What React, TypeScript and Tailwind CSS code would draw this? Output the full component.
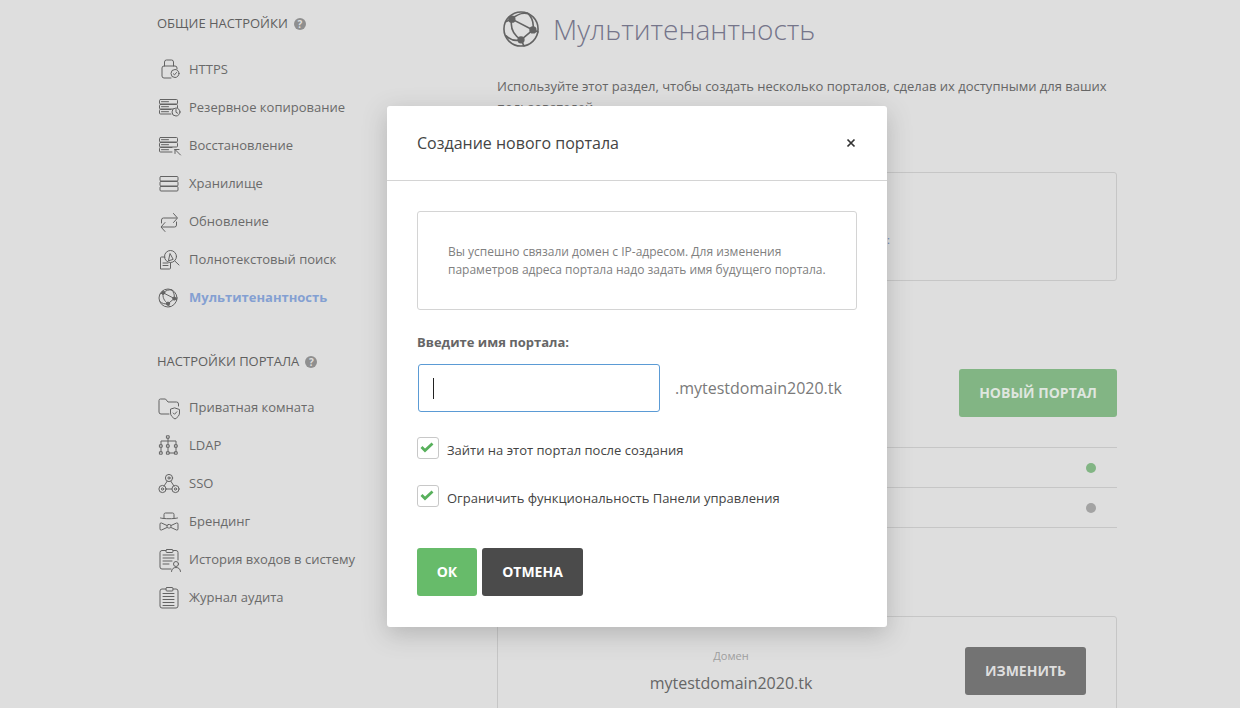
import React from "react";

const S = { fill: "none", stroke: "#636363", strokeWidth: 1, strokeLinecap: "round" as const, strokeLinejoin: "round" as const };

function Ic({ children }: { children: React.ReactNode }) {
  return (
    <svg width="22" height="22" viewBox="0 0 22 22" className="shrink-0 overflow-visible" {...S}>
      {children}
    </svg>
  );
}

const Globe = ({ r = 1.6 }: { r?: number }) => (
  <>
    <circle cx="11" cy="11" r="9" />
    <path d="M6.200 5.800C8.500 3.500 12 2.200 15 3M6.200 5.800L17.300 11.500M6.200 5.800C5.200 10 7 14 11 16.700M17.300 11.500L11 16.700M17.300 11.500C17.800 8.500 17 5 14.500 2.700M11 16.700C8 17.500 5 16.500 3 14.500M11 16.700L12.500 19.800M17.300 11.500L19.900 12.500M6.200 5.800L3.200 7" />
    <circle cx="6.200" cy="5.800" r={r} fill="#636363" />
    <circle cx="17.300" cy="11.500" r={r} fill="#636363" />
    <circle cx="11" cy="16.700" r={r} fill="#636363" />
  </>
);

const Rows3 = ({ last = 19 }: { last?: number }) => (
  <>
    <rect x="2.500" y="2.500" width="18" height="4.500" rx="1" />
    <rect x="2.500" y="7.500" width="18" height="4.500" rx="1" />
    <path d={`M${last} 12.500H3.500a1 1 0 0 0-1 1v2.500a1 1 0 0 0 1 1H${last}`} />
  </>
);

const icons: Record<string, React.ReactNode> = {
  https: (
    <Ic>
      <path d="M7.500 7V3a2 2 0 0 1 2-2h5a2 2 0 0 1 2 2v4" />
      <path d="M14 19H7a2 2 0 0 1-2-2V9a2 2 0 0 1 2-2h11a2 2 0 0 1 2 2v1" />
      <circle cx="18" cy="14.500" r="4" />
      <path d="M16.300 14.700l1.200 1.200 2-2.400" />
    </Ic>
  ),
  backup: (
    <Ic>
      <Rows3 last={14} />
      <path d="M4.500 4.700h7M4.500 9.700h7M4.500 14.700h7" />
      <circle cx="19" cy="15" r="4" fill="#dedede" />
      <path d="M19 12.500v2.800l1.800 1" />
    </Ic>
  ),
  restore: (
    <Ic>
      <Rows3 last={15} />
      <path d="M4.500 4.700h7M4.500 9.700h7M4.500 14.700h7" />
      <path d="M18 14.500h4M18 14.500v4M18 14.500l5.500 5.500" />
    </Ic>
  ),
  storage: (
    <Ic>
      <rect x="3" y="3.500" width="18" height="4.500" rx="1" />
      <rect x="3" y="8.500" width="18" height="4.500" rx="1" />
      <rect x="3" y="13.500" width="18" height="4.500" rx="1" />
    </Ic>
  ),
  update: (
    <Ic>
      <path d="M4.500 12V9a2 2 0 0 1 2-2h13M16.500 2.500L20.500 7l-4 4.500" />
      <path d="M19.500 11v3a2 2 0 0 1-2 2h-13M8 11.500L4 16l4 4.500" />
    </Ic>
  ),
  search: (
    <Ic>
      <circle cx="13.500" cy="7.500" r="6" />
      <path d="M17.800 12l4.200 4M11.500 11.500L13 4.500l3 5.500z" />
      <path d="M8 8H4.500a1 1 0 0 0-1 1v11h9a1 1 0 0 0 1-1v-5M6 14h5M6 16.500h5" />
    </Ic>
  ),
  globe: (
    <Ic>
      <Globe />
    </Ic>
  ),
  folder: (
    <Ic>
      <path d="M12 17H4a2 2 0 0 1-2-2V3.500A1.500 1.500 0 0 1 3.500 2h5l2.500 3h8.500a2 2 0 0 1 2 2v2" />
      <path d="M18 11l4.500 1.500v3.500c0 2.500-2 4.500-4.500 6-2.500-1.500-4.500-3.500-4.500-6v-3.500z" />
      <path d="M16.200 16l1.300 1.300 2.300-2.500" />
    </Ic>
  ),
  ldap: (
    <Ic>
      <rect x="9.800" y="0.800" width="2.400" height="2.400" />
      <rect x="2.800" y="9.800" width="2.400" height="2.400" />
      <rect x="9.800" y="9.800" width="2.400" height="2.400" />
      <rect x="17.800" y="9.800" width="2.400" height="2.400" />
      <rect x="2.800" y="16.800" width="2.400" height="2.400" />
      <rect x="9.800" y="16.800" width="2.400" height="2.400" />
      <rect x="17.800" y="16.800" width="2.400" height="2.400" />
      <path d="M11 3.200v6.600M4 9.800V6h15v3.800M4 12.200v4.600M11 12.200v4.600M19 12.200v4.600M12.200 18h5.600" />
    </Ic>
  ),
  sso: (
    <Ic>
      <circle cx="12" cy="5" r="3.600" />
      <circle cx="5.500" cy="16" r="3.600" />
      <circle cx="18.500" cy="16" r="3.600" />
      <circle cx="12" cy="5" r="1.100" />
      <circle cx="5.500" cy="16" r="1.100" />
      <circle cx="18.500" cy="16" r="1.100" />
      <path d="M10.200 8.200L7 13M13.800 8.200L17 13M9.100 16h5.800" />
    </Ic>
  ),
  brand: (
    <Ic>
      <path d="M7 7V3.500A1.500 1.500 0 0 1 8.500 2h7A1.500 1.500 0 0 1 17 3.500V7M3.500 7c3.500 1 13.500 1 17 0" />
      <path d="M10 14.500l-5.500-2.500a1.200 1.200 0 0 0-1.500 1.200v4.600a1.200 1.200 0 0 0 1.500 1.200l5.500-2.500M14 14.500l5.500-2.500a1.200 1.200 0 0 1 1.500 1.200v4.600a1.200 1.200 0 0 1-1.500 1.200l-5.500-2.500" />
      <rect x="10" y="13.500" width="4" height="3.500" rx="1.500" />
    </Ic>
  ),
  history: (
    <Ic>
      <path d="M14 20H5a2 2 0 0 1-2-2V3.500a2 2 0 0 1 2-2h4M16 1.500h3a2 2 0 0 1 2 2V11" />
      <rect x="9" y="0.500" width="7" height="3" rx="1" />
      <path d="M6 6h11M6 9h11M6 12h9M6 15h6" />
      <circle cx="19" cy="15" r="2.500" />
      <path d="M14.500 22.500c0-2.500 2-4 4.500-4s4.500 1.500 4.500 4" />
    </Ic>
  ),
  audit: (
    <Ic>
      <path d="M9 2H5a2 2 0 0 0-2 2v15a2 2 0 0 0 2 2h14a2 2 0 0 0 2-2V4a2 2 0 0 0-2-2h-3" />
      <rect x="9" y="0.500" width="7" height="3.500" rx="1" />
      <path d="M6 6.500h11M6 9.500h11M6 12.500h11M6 15.500h11M6 18.500h11" />
    </Ic>
  ),
};

function Help() {
  return (
    <span className="ml-[6px] flex h-[12px] w-[12px] items-center justify-center rounded-full bg-[#8f8f8f] text-[10px] font-bold leading-none text-[#dedede]">
      ?
    </span>
  );
}

function Heading({ children }: { children: React.ReactNode }) {
  return (
    <div className="flex h-[20px] items-center text-[13px] text-[#5f5f5f]">
      {children}
      <Help />
    </div>
  );
}

function Row({ icon, label, active }: { icon: string; label: string; active?: boolean }) {
  return (
    <div className="flex h-[38px] items-center">
      <span className="flex w-[32px] shrink-0">{icons[icon]}</span>
      <span className={active ? "text-[13px] font-bold text-[#84a0d2]" : "text-[13px] text-[#6a6a6a]"}>{label}</span>
    </div>
  );
}

function Check({ label }: { label: string }) {
  return (
    <div className="flex h-[22px] items-start">
      <span className="flex h-[22px] w-[22px] items-center justify-center rounded-[3px] border border-[#c8c8c8] bg-white">
        <svg width="14" height="12" viewBox="0 0 14 12" className="-mt-[3px] -ml-[2px]">
          <path d="M1.500 6l3.500 3.500L12.500 2.500" fill="none" stroke="#58b05c" strokeWidth="2.800" />
        </svg>
      </span>
      <span className="mt-[2px] ml-[8px] text-[13px] leading-[22px] text-[#444444]">{label}</span>
    </div>
  );
}

export default function App() {
  return (
    <div
      className="relative flex h-[708px] w-[1240px] overflow-hidden bg-[#dedede] pl-[157px]"
      style={{ fontFamily: '"Open Sans", "Noto Sans", sans-serif' }}
    >
      <aside className="w-[340px] shrink-0 pt-[14px]">
        <Heading>ОБЩИЕ НАСТРОЙКИ</Heading>
        <nav className="mt-[17px]">
          <Row icon="https" label="HTTPS" />
          <Row icon="backup" label="Резервное копирование" />
          <Row icon="restore" label="Восстановление" />
          <Row icon="storage" label="Хранилище" />
          <Row icon="update" label="Обновление" />
          <Row icon="search" label="Полнотекстовый поиск" />
          <Row icon="globe" label="Мультитенантность" active />
        </nav>
        <div className="mt-[35px]">
          <Heading>НАСТРОЙКИ ПОРТАЛА</Heading>
        </div>
        <nav className="mt-[17px]">
          <Row icon="folder" label="Приватная комната" />
          <Row icon="ldap" label="LDAP" />
          <Row icon="sso" label="SSO" />
          <Row icon="brand" label="Брендинг" />
          <Row icon="history" label="История входов в систему" />
          <Row icon="audit" label="Журнал аудита" />
        </nav>
      </aside>

      <main className="w-[620px] shrink-0">
        <div className="flex h-[58px] items-center pl-[6px]">
          <svg width="36" height="36" viewBox="1.500 1.500 19 19" className="shrink-0" {...S} strokeWidth={0.85}>
            <Globe r={1.5} />
          </svg>
          <h1 className="ml-[14px] text-[28px] font-light leading-[38px] text-[#75758a]">Мультитенантность</h1>
        </div>
        <p className="mt-[18px] text-[13px] leading-[21px] text-[#666666]">
          Используйте этот раздел, чтобы создать несколько порталов, сделав их доступными для ваших пользователей
        </p>
        <div className="mt-[54px] flex h-[109px] items-center justify-end rounded-[3px] border border-[#c6c6c6] pt-[26px] pr-[226px]">
          <span className="text-[11px] leading-none text-[#5b7fb5]">:</span>
        </div>
        <div className="mt-[88px] flex justify-end">
          <button className="h-[48px] w-[158px] rounded-[3px] bg-[#82b584] pb-[1px] text-[14px] font-bold text-[#dfe6df]">
            НОВЫЙ ПОРТАЛ
          </button>
        </div>
        <div className="mt-[30px] border-y border-[#c6c6c6]">
          <div className="flex h-[39px] items-center justify-end pr-[21px]">
            <span className="h-[10px] w-[10px] rounded-full bg-[#82b584]" />
          </div>
          <div className="flex h-[40px] items-center justify-end border-t border-[#c6c6c6] pr-[21px]">
            <span className="h-[10px] w-[10px] rounded-full bg-[#a3a3a3]" />
          </div>
        </div>
        <div className="mt-[88px] flex h-[110px] items-start justify-between rounded-[3px] border border-[#c6c6c6] pt-[30px] pr-[30px]">
          <div className="w-[466px] text-center">
            <div className="text-[11px] leading-[18px] text-[#a0a0a0]">Домен</div>
            <div className="mt-[7px] text-[16px] leading-[22px] text-[#666666]">mytestdomain2020.tk</div>
          </div>
          <button className="h-[48px] w-[121px] rounded-[3px] bg-[#737373] pb-[1px] text-[14px] font-bold text-[#dedede]">
            ИЗМЕНИТЬ
          </button>
        </div>
      </main>

      <div className="absolute top-[106px] left-[387px] h-[521px] w-[500px] rounded-[3px] bg-white shadow-[0_7px_25px_rgba(85,85,85,0.3)]">
        <div className="flex h-[75px] items-center justify-between border-b border-[#d4d4d4] pr-[31px] pl-[30px]">
          <span className="text-[16px] text-[#444444]">Создание нового портала</span>
          <svg width="10" height="10" viewBox="0 0 10 10">
            <path d="M1.500 1.500l7 7M8.500 1.500l-7 7" stroke="#333333" strokeWidth="1.700" fill="none" />
          </svg>
        </div>
        <div className="px-[30px] pt-[30px]">
          <div className="flex h-[99px] items-center rounded-[3px] border border-[#d4d4d4] px-[30px] text-[12px] leading-[18px] text-[#808080]">
            <p>
              Вы успешно связали домен с IP-адресом. Для изменения
              <br />
              параметров адреса портала надо задать имя будущего портала.
            </p>
          </div>
          <label className="mt-[23px] block text-[13px] font-bold leading-[18px] text-[#666666]">
            Введите имя портала:
          </label>
          <div className="mt-[13px] flex items-center pl-[1px]">
            <div className="flex h-[48px] w-[242px] items-center rounded-[3px] border border-[#5b9bd5] pl-[14px]">
              <span className="h-[21px] w-px bg-[#222222]" />
            </div>
            <span className="ml-[15px] text-[16px] text-[#7a7a7a]">.mytestdomain2020.tk</span>
          </div>
          <div className="mt-[25px] flex flex-col gap-[26px]">
            <Check label="Зайти на этот портал после создания" />
            <Check label="Ограничить функциональность Панели управления" />
          </div>
          <div className="mt-[41px] flex gap-[5px]">
            <button className="h-[48px] w-[60px] rounded-[3px] bg-[#67bb6a] pb-[1px] text-[14px] font-bold text-white">ОК</button>
            <button className="h-[48px] w-[101px] rounded-[3px] bg-[#4b4b4b] pb-[1px] text-[14px] font-bold text-white">ОТМЕНА</button>
          </div>
        </div>
      </div>
    </div>
  );
}
